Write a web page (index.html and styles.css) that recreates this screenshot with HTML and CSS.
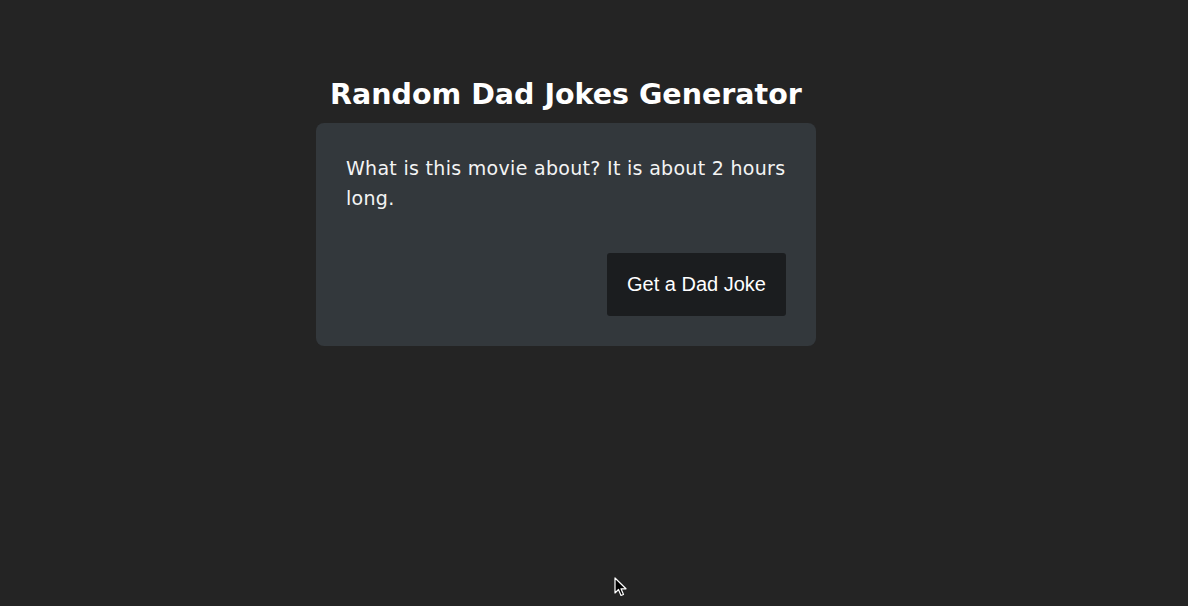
FILE: index.html
```html
<!DOCTYPE html>
<html lang="en">
<head>
<meta charset="utf-8">
<title>Random Dad Jokes Generator</title>
<link rel="stylesheet" href="styles.css">
</head>
<body>
<main class="page">
  <h1 class="title">Random Dad Jokes Generator</h1>
  <section class="card">
    <p class="joke">What is this movie about? It is about 2 hours long.</p>
    <div class="actions">
      <button class="btn" type="button">Get a Dad Joke</button>
    </div>
  </section>
</main>
<svg class="cursor" width="14" height="21" viewBox="0 0 14 21" aria-hidden="true">
  <path d="M1 1 L1 16 L4.5 12.5 L7 18.5 L9.5 17.5 L7 11.8 L12 11.8 Z" fill="#000" stroke="#fff" stroke-width="1.2" stroke-linejoin="round"/>
</svg>
</body>
</html>
```
FILE: styles.css
```css
html, body {
  margin: 0;
  padding: 0;
  background: #242424;
  height: 100%;
}
body {
  font-family: "DejaVu Sans", "Open Sans", sans-serif;
  color: #fff;
  overflow: hidden;
}
.page {
  display: flex;
  flex-direction: column;
  align-items: center;
  padding-top: 77px;
  padding-right: 56px;
}
.title {
  margin: 0 0 10px;
  font-size: 28.5px;
  font-weight: 700;
  line-height: 36px;
  letter-spacing: 0;
}
.card {
  box-sizing: border-box;
  width: 500px;
  padding: 30px;
  background: #33383c;
  border-radius: 8px;
}
.joke {
  margin: 0;
  font-size: 19px;
  line-height: 30px;
  font-weight: 400;
  letter-spacing: 0.3px;
  color: #f4f4f4;
}
.actions {
  display: flex;
  justify-content: flex-end;
  margin-top: 40px;
}
.btn {
  font-family: "Liberation Sans", Arial, sans-serif;
  font-size: 20px;
  line-height: 23px;
  color: #fff;
  background: #1b1d1f;
  border: none;
  border-radius: 3px;
  padding: 20px;
  width: 179px;
}
.cursor {
  position: absolute;
  left: 614px;
  top: 577px;
}
```
